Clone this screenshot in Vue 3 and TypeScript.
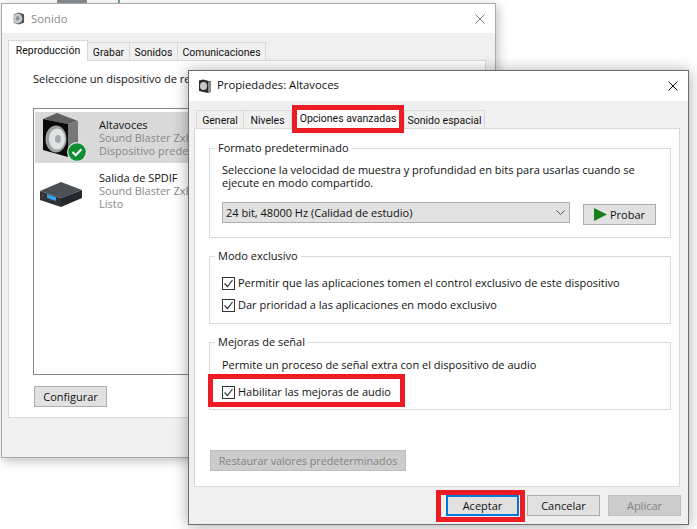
<script setup lang="ts">
const exclusive: string[] = [
  'Permitir que las aplicaciones tomen el control exclusivo de este dispositivo',
  'Dar prioridad a las aplicaciones en modo exclusivo',
]
</script>

<template>
  <div class="desk">
    <div class="peekbox"></div>
    <div class="peek">Reproducción automática</div>

    <section class="win back">
      <header class="title dim">
        <svg class="tico" viewBox="0 0 14 14">
          <path d="M2 2.500L7 .5l6 2v9l-6 2-5-2z" fill="#555"/>
          <ellipse cx="6" cy="7" rx="5" ry="5.500" fill="#c4ccd0"/>
          <ellipse cx="6" cy="7" rx="2" ry="2.500" fill="#8b9296"/>
        </svg>
        <span>Sonido</span>
        <svg class="x" viewBox="0 0 10 10"><path d="M.5.5l9 9M9.500.5l-9 9" stroke="#777" fill="none"/></svg>
      </header>
      <div class="body bbody">
        <div class="tabs btabs">
          <div class="tab on t80">Reproducción</div>
          <div class="tab t43">Grabar</div>
          <div class="tab t49">Sonidos</div>
          <div class="tab t89">Comunicaciones</div>
        </div>
        <div class="panel bpanel">
          <p class="lead">Seleccione un dispositivo de reproducción para modificar sus opciones:</p>
          <div class="list">
            <div class="dev sel">
              <svg class="devicon" viewBox="35 112 64 51">
                <path d="M43 119l14-6 21 8-10 3z" fill="#5f6062"/>
                <path d="M68 124l10-3v31l-10 5z" fill="#77787a"/>
                <path d="M43 119l25 5v33l-25-7z" fill="#0a0a0a"/>
                <ellipse cx="56" cy="139" rx="10.500" ry="13.500" fill="#9fa3a3"/>
                <ellipse cx="57" cy="139" rx="8" ry="10.500" fill="#dfe3e3"/>
                <ellipse cx="58" cy="139" rx="3" ry="4" fill="#a4a8a8"/>
                <circle cx="77" cy="152" r="10" fill="#e4e4e4"/>
                <circle cx="77" cy="152" r="8.800" fill="#0f8f30"/>
                <path d="M72.500 152l3.200 3.200 5.800-6" stroke="#fff" stroke-width="2" fill="none"/>
              </svg>
              <div class="devtext">
                <div>Altavoces</div>
                <div class="grey">Sound Blaster ZxR</div>
                <div class="grey">Dispositivo predeterminado</div>
              </div>
            </div>
            <div class="dev">
              <svg class="devicon" viewBox="35 163 64 51">
                <path d="M40 191l21-9 21 8-21 8z" fill="#4a5056"/>
                <path d="M40 191l21 7v9l-21-7z" fill="#2e3338"/>
                <path d="M61 198l21-8v8l-21 9z" fill="#24282c"/>
                <path d="M47 194l9 3v4l-9-3z" fill="#3aa0e6"/>
                <circle cx="43" cy="195.500" r="1" fill="#b33"/>
              </svg>
              <div class="devtext">
                <div>Salida de SPDIF</div>
                <div class="grey">Sound Blaster ZxR</div>
                <div class="grey">Listo</div>
              </div>
            </div>
          </div>
          <div class="btn cfg">Configurar</div>
        </div>
      </div>
    </section>

    <section class="win front">
      <header class="title">
        <svg class="tico" viewBox="0 0 14 14">
          <path d="M1 1.500L5 .5l8 2v10l-3 1.500-9-2z" fill="#2c2c2c"/>
          <path d="M10 2.500l3 0v10l-3 1.500z" fill="#8a8a8a"/>
          <ellipse cx="5.500" cy="7" rx="3.500" ry="4" fill="#c8c8c8"/>
        </svg>
        <span class="ftitle">Propiedades: Altavoces</span>
        <svg class="x" viewBox="0 0 10 10"><path d="M.5.5l9 9M9.500.5l-9 9" stroke="#111" fill="none"/></svg>
      </header>
      <div class="body fbody">
        <div class="tabs ftabs">
          <div class="tab t48">General</div>
          <div class="tab t48">Niveles</div>
          <div class="tab on markedtab">Opciones avanzadas</div>
          <div class="tab t81">Sonido espacial</div>
        </div>
        <div class="panel fpanel">
          <div class="grp g1">
            <span class="legend">Formato predeterminado</span>
            <p class="gtext">Seleccione la velocidad de muestra y profundidad en bits para usarlas cuando se ejecute en modo compartido.</p>
            <div class="row">
              <div class="select">
                <span>24 bit, 48000 Hz (Calidad de estudio)</span>
                <svg width="9" height="5" viewBox="0 0 9 5"><path d="M.5.5l4 4 4-4" stroke="#555" fill="none"/></svg>
              </div>
              <div class="btn probar">
                <svg width="13" height="13" viewBox="0 0 13 13"><path d="M0 0l13 6.500-13 6.500z" fill="#1a7f1a"/></svg>
                <span>Probar</span>
              </div>
            </div>
          </div>
          <div class="grp g2">
            <span class="legend">Modo exclusivo</span>
            <label v-for="t in exclusive" :key="t" class="chk">
              <svg class="box" viewBox="0 0 13 13"><rect x=".5" y=".5" width="12" height="12" fill="#fff" stroke="#333"/><path d="M2.500 6.500l3 3 5-6.500" stroke="#333" stroke-width="1.200" fill="none"/></svg>
              <span>{{ t }}</span>
            </label>
          </div>
          <div class="grp g3">
            <span class="legend">Mejoras de señal</span>
            <p class="gtext">Permite un proceso de señal extra con el dispositivo de audio</p>
            <label class="chk enh">
              <svg class="box" viewBox="0 0 13 13"><rect x=".5" y=".5" width="12" height="12" fill="#fff" stroke="#333"/><path d="M2.500 6.500l3 3 5-6.500" stroke="#333" stroke-width="1.200" fill="none"/></svg>
              <span>Habilitar las mejoras de audio</span>
            </label>
          </div>
          <div class="btn off restore">Restaurar valores predeterminados</div>
        </div>
        <footer class="foot">
          <div class="okwrap"><div class="btn ok">Aceptar</div></div>
          <div class="btn cancel">Cancelar</div>
          <div class="btn off cancel">Aplicar</div>
        </footer>
      </div>
    </section>
  </div>
</template>

<style>
html, body { margin: 0; background: #fff; }
</style>

<style scoped>
.desk {
  position: relative;
  width: 697px;
  height: 529px;
  overflow: hidden;
  background: #fff;
  font: 11px/16px "Open Sans", "Noto Sans", sans-serif;
  color: #111;
}
.peekbox {
  position: absolute;
  left: 57px;
  top: 0;
  width: 30px;
  height: 3px;
  background: #8a8f94;
}
.peek {
  position: absolute;
  left: 100px;
  top: -13px;
  font-size: 14.500px;
  line-height: 16px;
  color: #1a6a5a;
}
.win {
  position: absolute;
  box-sizing: border-box;
  display: flex;
  flex-direction: column;
  background: #f0f0f0;
  border: 1px solid #8a8a8a;
}
.back {
  left: 1px;
  top: 3px;
  width: 495px;
  height: 455px;
  box-shadow: 2px 3px 10px rgba(0, 0, 0, .25);
  border-color: #aaa;
}
.front {
  left: 188px;
  top: 70px;
  width: 501px;
  height: 455px;
  box-shadow: 0 1px 14px rgba(0, 0, 0, .35);
  border-color: #6e6e6e;
}
.title {
  flex: none;
  display: flex;
  align-items: center;
  gap: 5px;
  padding: 0 10px 0 9px;
  background: #fff;
  font-size: 11.300px;
  height: 30px;
}
.title span { flex: 1; }
.ftitle { margin-top: -2px; }
.dim { color: #8a8a8a; height: 29px; gap: 6px; padding-left: 10px; }
.tico { width: 14px; height: 14px; flex: none; }
.dim .tico { width: 13px; height: 13px; }
.x { width: 10px; height: 10px; }
.body {
  flex: 1;
  display: flex;
  flex-direction: column;
  min-height: 0;
}
.tabs {
  display: flex;
  align-items: flex-end;
  position: relative;
  z-index: 1;
  font-family: Roboto, "Open Sans", sans-serif;
  font-size: 10.500px;
}
.tab {
  box-sizing: border-box;
  text-align: center;
  border: 1px solid #d9d9d9;
  border-bottom: 0;
  background: #f0f0f0;
  white-space: nowrap;
}
.t43 { width: 43px; }
.t48 { width: 48px; }
.t49 { width: 49px; }
.t80 { width: 80px; }
.t81 { width: 81px; }
.t89 { width: 89px; }
.panel {
  box-sizing: border-box;
  background: #fff;
  border: 1px solid #d9d9d9;
}

.bbody { padding: 7px 9px 0 6px; }
.btabs { height: 20px; }
.btabs .tab { height: 18px; line-height: 19px; margin-left: -1px; }
.btabs .tab:first-child { margin-left: 0; }
.btabs .tab.on { height: 21px; margin-bottom: -1px; background: #fff; line-height: 20px; }
.bpanel { height: 358px; padding: 10px 24px 0; }
.lead { margin: 0; white-space: nowrap; height: 37px; }
.list {
  box-sizing: border-box;
  height: 267px;
  width: 428px;
  border: 1px solid #82878b;
  padding: 3px 1px;
}
.dev {
  display: flex;
  height: 51px;
  line-height: 13px;
  align-items: center;
}
.devtext { padding-top: 3px; white-space: nowrap; }
.dev.sel .devtext { padding: 0 0 1px; }
.dev.sel { background: #d9d9d9; }
.devicon { width: 64px; height: 51px; flex: none; }
.grey { color: #888; }
.btn {
  box-sizing: border-box;
  background: #e1e1e1;
  border: 1px solid #adadad;
  width: 73px;
  height: 21px;
  line-height: 19px;
  text-align: center;
  white-space: nowrap;
}
.btn.off { background: #ccc; border-color: #bfbfbf; color: #838383; }
.cfg { margin: 11px 0 0 1px; }

.fbody { padding: 9px 8px 0 5px; }
.ftabs { height: 18px; align-items: flex-start; padding-left: 2px; }
.ftabs .tab { height: 18px; line-height: 20px; }
.ftabs .tab:nth-child(2) { margin-left: -1px; width: 49px; }
.markedtab.tab {
  box-sizing: border-box;
  width: 112px;
  height: 28px;
  margin: -5px 0 0;
  border: 5px solid #ed1c24;
  background: #fff;
  line-height: 17px;
}
.fpanel {
  height: 359px;
  padding: 19px 0 0 14px;
  display: flex;
  flex-direction: column;
}
.grp {
  position: relative;
  box-sizing: border-box;
  padding: 0 0 0 12px;
  border: 1px solid #d9d9d9;
  width: 462px;
  flex: none;
}
.legend {
  position: absolute;
  left: 5px;
  top: -9px;
  padding: 0 3px;
  background: #fff;
}
.g1 { height: 90px; padding-top: 14px; }
.g2 { height: 68px; margin-top: 18px; padding-top: 18px; }
.g3 { height: 68px; margin-top: 18px; padding-top: 15px; }
.gtext { margin: 0; line-height: 13px; width: 425px; }
.row { display: flex; align-items: flex-start; margin-top: 13px; gap: 13px; }
.select {
  box-sizing: border-box;
  width: 348px;
  height: 21px;
  background: #e1e1e1;
  border: 1px solid #adadad;
  display: flex;
  align-items: center;
  justify-content: space-between;
  padding: 0 4px 0 3px;
}
.probar {
  display: flex;
  align-items: center;
  justify-content: center;
  gap: 3px;
  margin-top: 2px;
}
.chk { display: flex; align-items: center; gap: 3px; height: 16px; margin-bottom: 6px; }
.box { width: 13px; height: 13px; flex: none; }
.enh {
  box-sizing: border-box;
  width: 197px;
  height: 33px;
  margin: 3px 0 0 -14px;
  padding: 3px 0 0 9px;
  border: 5px solid #ed1c24;
}
.restore { width: 196px; margin: 40px 0 0 1px; font-size: 10.800px; }
.foot {
  display: flex;
  justify-content: flex-end;
  align-items: flex-start;
  padding-top: 3px;
  margin-right: -1px;
}
.okwrap {
  box-sizing: border-box;
  width: 89px;
  height: 32px;
  padding-left: 5px;
  border: 5px solid #ed1c24;
  margin-right: 2px;
}
.ok { border: 2px solid #0078d7; line-height: 17px; margin-left: 0; }
.cancel { margin-top: 5px; }
.cancel + .cancel { margin-left: 8px; }
</style>
